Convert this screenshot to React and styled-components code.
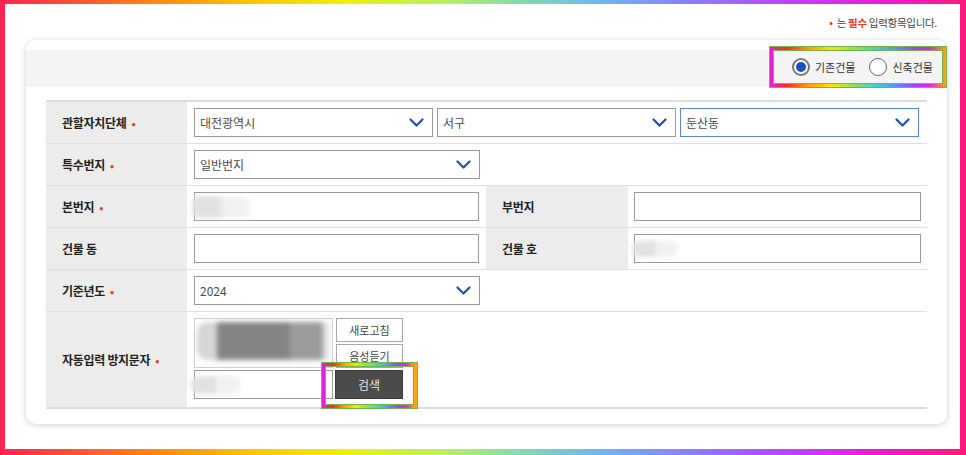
import React from 'react'
import styled, { createGlobalStyle } from 'styled-components'

const GlobalStyle = createGlobalStyle`
  html, body { margin: 0; padding: 0; }
  body {
    font-family: "Noto Sans CJK KR", "Noto Sans", sans-serif;
    background: #fff;
  }
  * { box-sizing: border-box; }
`;

const rainbow = `linear-gradient(90deg, #e020e8 0%, #ff2a2a 10%, #ff9a00 22%, #f4e800 35%, #8ee060 48%, #40d0d0 60%, #5a8cff 72%, #a040ff 82%, #e020e8 90%, #ffb000 100%)`;

const Frame = styled.div`
  width: 966px;
  height: 455px;
  padding: 4px 6px 6px 5px;
  background: linear-gradient(90deg, #ff2452 0%, #ff7a1a 14%, #ffc400 26%, #eef010 36%, #b8f060 46%, #80dcb0 54%, #70b8f0 62%, #8a7cff 72%, #c040ff 82%, #f018d0 92%, #ff1a78 100%);
`;

const Inner = styled.div`
  height: 100%;
  background: #fff;
  padding: 10px 13px 0 21px;
`;

const Notice = styled.div`
  line-height: 16px;
  font-size: 10.5px;
  color: #444;
  text-align: right;
  padding-right: 10px;
  letter-spacing: -0.3px;
  b { color: #e5401a; font-weight: 700; }
`;

const RedDot = styled.span`
  color: #e5401a;
  font-size: 11px;
  margin: ${p => p.$m || '0 4px 0 0'};
`;

const Card = styled.div`
  margin-top: 9px;
  background: #fff;
  border-radius: 10px;
  box-shadow: 0 1px 6px rgba(0, 0, 0, 0.2);
  padding: 10px 0 15px;
`;

const Band = styled.div`
  height: 37px;
  background: #f4f4f4;
  display: flex;
  justify-content: flex-end;
  align-items: center;
`;

const RadioBox = styled.div`
  width: 178px;
  height: 42px;
  margin: -4px 0 -1px;
  border: 4px solid transparent;
  background: linear-gradient(#f4f4f4, #f4f4f4) padding-box, ${rainbow} border-box;
  outline: 1px solid #74b548;
  outline-offset: -1px;
  box-shadow: inset 0 0 0 1px #74b548;
  display: flex;
  align-items: center;
  padding-left: 19px;
  gap: 14px;
`;

const RadioItem = styled.label`
  display: flex;
  align-items: center;
  gap: 5px;
  font-size: 11px;
  color: #333;
`;

const Radio = styled.span`
  width: 18px;
  height: 18px;
  border-radius: 50%;
  border: ${p => (p.$on ? '2px solid #777' : '1px solid #666')};
  background: #fff;
  display: flex;
  align-items: center;
  justify-content: center;
  &::after {
    content: '';
    width: 10px;
    height: 10px;
    border-radius: 50%;
    background: ${p => (p.$on ? '#1f4fbf' : 'transparent')};
  }
`;

const Table = styled.div`
  margin: 13px 20px 0;
  border-top: 2px solid #dcdcdc;
`;

const Row = styled.div`
  display: grid;
  grid-template-columns: 141px 299px 142px 1fr;
  min-height: ${p => p.$h || 42}px;
  border-bottom: ${p => (p.$last ? '2px solid #dcdcdc' : '1px solid #e0e0e0')};
`;

const Label = styled.div`
  background: #ececec;
  display: flex;
  align-items: center;
  padding-left: 16px;
  font-size: 12px;
  font-weight: 700;
  color: #222;
  letter-spacing: -0.3px;
`;

const Cell = styled.div`
  grid-column: span ${p => p.$span || 1};
  display: flex;
  align-items: ${p => (p.$top ? 'flex-start' : 'center')};
  padding: ${p => p.$pad || '0 7px'};
`;

const Selects = styled.div`
  display: grid;
  grid-template-columns: 239px 239px 239px;
  column-gap: 4px;
`;

const SelectBox = styled.div`
  width: ${p => p.$w || '100%'};
  height: 29px;
  display: flex;
  align-items: center;
  justify-content: space-between;
  padding: 0 8px 0 5px;
  background: #fff;
  border: 1px solid ${p => (p.$focus ? '#5b86d6' : '#9a9a9a')};
  font-size: 12px;
  color: #4a4a4a;
`;

const Field = styled.div`
  width: ${p => p.$w || '100%'};
  height: 29px;
  display: flex;
  align-items: center;
  background: #fff;
  border: 1px solid #9a9a9a;
`;

const Blur = styled.span`
  display: block;
  width: ${p => p.$w}px;
  height: ${p => p.$h || 18}px;
  margin-left: ${p => p.$ml || 0}px;
  border-radius: 8px;
  background: linear-gradient(90deg, #e2e2e2 0%, #e2e2e2 45%, #f0f0f0 55%, #f2f2f2 100%);
  filter: blur(2px);
`;

const Captcha = styled.div`
  display: grid;
  grid-template-columns: 139px 67px;
  grid-template-rows: 24px 24px 29px;
  column-gap: 3px;
  row-gap: 2px;
`;

const CaptchaImg = styled.div`
  grid-row: span 2;
  border: 1px solid #cfcfcf;
  background: #fff;
  padding: 3px 2px;
  overflow: hidden;
`;

const CaptchaBlur = styled.div`
  display: flex;
  height: 38px;
  filter: blur(2.5px);
`;

const Seg = styled.span`
  width: ${p => p.$w}px;
  flex: ${p => (p.$w ? 'none' : 1)};
  background: ${p => p.$c};
  border-radius: ${p => p.$r || 0};
`;

const Btn = styled.button`
  font-family: inherit;
  font-size: 11px;
  color: #444;
  background: #fff;
  border: 1px solid #a8a8a8;
  padding: 0;
  height: 24px;
  cursor: pointer;
`;

const Highlight = styled.div`
  position: relative;
  display: flex;
  margin-left: -1px;
  &::after {
    content: '';
    position: absolute;
    inset: -8px -15px -10px -14px;
    border: 4px solid;
    border-image: ${rainbow} 1;
    outline: 1px solid #74b548;
    outline-offset: -1px;
    box-shadow: inset 0 0 0 1px #74b548;
    pointer-events: none;
  }
`;

const SearchBtn = styled.button`
  flex: 1;
  font-family: inherit;
  font-size: 12px;
  color: #e2e2e2;
  background: #4b4b4b;
  border: 1px solid #3a3a3a;
  cursor: pointer;
`;

const Chevron = () => (
  <svg width="15" height="9" viewBox="0 0 15 9">
    <polyline points="1.5,1.5 7.5,7.5 13.5,1.5" fill="none" stroke="#1f4fae"
      strokeWidth="2.2" strokeLinecap="round" strokeLinejoin="round" />
  </svg>
);

const Select = ({ value, w, focus }) => (
  <SelectBox $w={w} $focus={focus}>
    <span>{value}</span>
    <Chevron />
  </SelectBox>
);

const Req = () => <RedDot $m="0 0 0 5px">•</RedDot>;

export default function App() {
  return (
    <>
      <GlobalStyle />
      <Frame>
        <Inner>
          <Notice>
            <RedDot>•</RedDot>는 <b>필수</b> 입력항목입니다.
          </Notice>
          <Card>
            <Band>
              <RadioBox>
                <RadioItem><Radio $on />기존건물</RadioItem>
                <RadioItem><Radio />신축건물</RadioItem>
              </RadioBox>
            </Band>
            <Table>
              <Row>
                <Label>관할자치단체<Req /></Label>
                <Cell $span={3}>
                  <Selects>
                    <Select value="대전광역시" />
                    <Select value="서구" />
                    <Select value="둔산동" focus />
                  </Selects>
                </Cell>
              </Row>
              <Row>
                <Label>특수번지<Req /></Label>
                <Cell $span={3}><Select value="일반번지" w="286px" /></Cell>
              </Row>
              <Row>
                <Label>본번지<Req /></Label>
                <Cell><Field><Blur $w={58} $h={22} $ml={-3} /></Field></Cell>
                <Label>부번지</Label>
                <Cell $pad="0 6px"><Field /></Cell>
              </Row>
              <Row>
                <Label>건물 동</Label>
                <Cell><Field /></Cell>
                <Label>건물 호</Label>
                <Cell $pad="0 6px"><Field><Blur $w={46} $h={16} $ml={-3} /></Field></Cell>
              </Row>
              <Row>
                <Label>기준년도<Req /></Label>
                <Cell $span={3}><Select value="2024" w="286px" /></Cell>
              </Row>
              <Row $h={97} $last>
                <Label>자동입력 방지문자<Req /></Label>
                <Cell $span={3} $top $pad="6px 7px">
                  <Captcha>
                    <CaptchaImg>
                      <CaptchaBlur>
                        <Seg $w={20} $c="#d6d6d6" $r="10px 0 0 10px" />
                        <Seg $w={73} $c="#848484" />
                        <Seg $w={33} $c="#9c9c9c" />
                        <Seg $c="#e6e6e6" />
                      </CaptchaBlur>
                    </CaptchaImg>
                    <Btn>새로고침</Btn>
                    <Btn>음성듣기</Btn>
                    <Field><Blur $w={50} $h={18} $ml={-4} /></Field>
                    <Highlight>
                      <SearchBtn>검색</SearchBtn>
                    </Highlight>
                  </Captcha>
                </Cell>
              </Row>
            </Table>
          </Card>
        </Inner>
      </Frame>
    </>
  );
}
